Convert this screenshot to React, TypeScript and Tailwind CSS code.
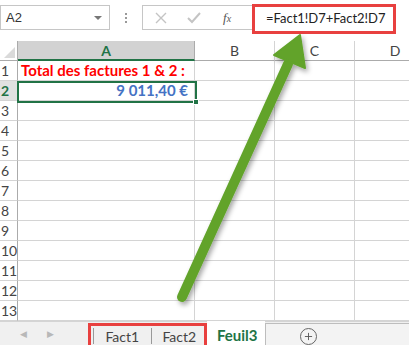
import { Plus } from "lucide-react";

const rows = Array.from({ length: 13 }, (_, i) => i + 1);

function Cell({ w, children, className = "" }: { w: string; children?: React.ReactNode; className?: string }) {
  return (
    <div className={`${w} h-full shrink-0 border-r border-b border-[#d4d4d4] flex items-center ${className}`}>
      {children}
    </div>
  );
}

export default function App() {
  return (
    <div className="relative w-[409px] h-[345px] overflow-hidden bg-white font-['Lato','Liberation_Sans',sans-serif] text-[#444]">
      {/* Formula toolbar */}
      <div className="flex h-[41px] items-start">
        <div className="mt-[5px] w-[110px] h-[25px] border border-[#c6c6c6] flex items-center justify-between pl-[5px] pr-[7px] text-[13px] text-[#333] font-['Liberation_Sans',sans-serif]">
          A2
          <span className="w-0 h-0 border-l-[4px] border-r-[4px] border-t-[4px] border-l-transparent border-r-transparent border-t-[#777]" />
        </div>
        <div className="w-[32px] h-[30px] flex flex-col items-center justify-center gap-[2px] pt-[6px]">
          <span className="w-[2px] h-[2px] bg-[#999]" />
          <span className="w-[2px] h-[2px] bg-[#999]" />
          <span className="w-[2px] h-[2px] bg-[#999]" />
        </div>
        <div className="mt-[5px] w-[130px] h-[25px] border border-[#c6c6c6] flex items-center text-[#c0c0c0]">
          <svg width="12" height="12" viewBox="0 0 12 12" className="ml-[12px]">
            <path d="M1 1 L11 11 M11 1 L1 11" stroke="#c4c4c4" strokeWidth="1.4" />
          </svg>
          <svg width="14" height="12" viewBox="0 0 14 12" className="ml-[20px]">
            <path d="M1 6 L5 10 L13 1" stroke="#c4c4c4" strokeWidth="2" fill="none" />
          </svg>
          <span className="ml-[22px] italic text-[13px] text-[#555] font-['Liberation_Serif',serif]">
            f<span className="text-[10px]">x</span>
          </span>
        </div>
      </div>

      {/* Red-framed formula */}
      <div className="absolute left-[252px] top-[4px] w-[144px] h-[30px] border-[3px] border-[#e8403f] bg-white flex items-center pl-[11px] text-[13px] text-[#222] font-['Lato',sans-serif] whitespace-nowrap">
        =Fact1!D7+Fact2!D7
      </div>

      {/* Sheet grid */}
      <div className="font-['Lato','Liberation_Sans',sans-serif]">
        <div className="flex h-[20px]">
          <div className="relative w-[18px] h-full shrink-0 border-r border-b border-[#ababab]">
            <span className="absolute right-[2px] bottom-[2px] w-0 h-0 border-b-[11px] border-l-[11px] border-b-[#dadada] border-l-transparent" />
          </div>
          <div className="w-[177px] h-full shrink-0 bg-[#d2d2d2] border-b-2 border-[#217346] border-r border-r-[#ababab] flex items-center justify-center font-bold text-[14px] text-[#217346]">
            A
          </div>
          <div className="w-[80px] h-full shrink-0 border-r border-b border-[#ababab] border-r-[#d4d4d4] flex items-center justify-center text-[14px]">B</div>
          <div className="w-[80px] h-full shrink-0 border-r border-b border-[#ababab] border-r-[#d4d4d4] flex items-center justify-center text-[14px]">C</div>
          <div className="w-[80px] h-full shrink-0 border-b border-[#ababab] flex items-center justify-center text-[14px]">D</div>
        </div>

        {rows.map((r) => (
          <div key={r} className="flex h-[20px]">
            <div
              className={`w-[18px] h-full shrink-0 border-r border-r-[#ababab] border-b border-b-[#d4d4d4] flex items-center pl-[1px] text-[14px] leading-none ${
                r === 2 ? "bg-[#e1e1e1] text-[#217346] font-bold" : "text-[#444]"
              }`}
            >
              {r}
            </div>
            <Cell w="w-[177px]">
              {r === 1 && (
                <span className="pl-[3px] font-bold text-[15px] text-[#ff0000] whitespace-nowrap">Total des factures 1 &amp; 2 :</span>
              )}
              {r === 2 && (
                <span className="ml-auto pr-[6px] font-bold text-[15px] text-[#4472c4]">9 011,40 €</span>
              )}
            </Cell>
            <Cell w="w-[80px]" />
            <Cell w="w-[80px]" />
            <Cell w="w-[80px]" />
          </div>
        ))}
      </div>

      {/* Selection on A2 */}
      <div className="absolute left-[17px] top-[81px] w-[180px] h-[22px] border-2 border-[#217346]">
        <span className="absolute -right-[4px] -bottom-[4px] w-[6px] h-[6px] bg-[#217346] border border-white" />
      </div>

      {/* Sheet tabs */}
      <div className="flex h-[24px] bg-[#f0f0f0] border-t border-[#d4d4d4] font-['Lato',sans-serif]">
        <div className="w-[88px] flex items-center gap-[20px] pl-[20px] text-[#b8b8b8] text-[9px]">
          <span>◀</span>
          <span>▶</span>
        </div>
        <div className="w-[119px] flex items-start text-[14px] text-[#444]">
          <span className="h-[16px] mt-[6px] border-l border-[#999] ml-[5px]" />
          <span className="w-[57px] text-center pt-[8px] leading-none">Fact1</span>
          <span className="h-[16px] mt-[6px] border-l border-[#999]" />
          <span className="w-[56px] text-center pt-[8px] leading-none">Fact2</span>
        </div>
        <div className="w-[58px] -mt-px bg-white flex items-start pt-[7px] pl-[10px] leading-none font-bold text-[15px] text-[#217346]">
          Feuil3
        </div>
        <div className="flex-1 mt-[1px] border-t border-l border-[#bdbdbd] bg-[#f3f3f3] flex items-end pl-[34px]">
          <span className="w-[17px] h-[17px] rounded-full border border-[#666] flex items-center justify-center">
            <Plus size={11} strokeWidth={2} color="#555" />
          </span>
        </div>
      </div>

      {/* Red frame around Fact1/Fact2 */}
      <div className="absolute left-[88px] top-[323px] w-[119px] h-[26px] border-[3px] border-[#e8403f]" />

      {/* Green arrow */}
      <svg className="absolute left-0 top-0 pointer-events-none" width="409" height="345" viewBox="0 0 409 345">
        <defs>
          <filter id="sh" x="-20%" y="-20%" width="140%" height="140%">
            <feDropShadow dx="2" dy="3" stdDeviation="2.5" floodColor="#000" floodOpacity="0.35" />
          </filter>
        </defs>
        <g filter="url(#sh)">
          <line x1="182" y1="297" x2="288" y2="64" stroke="#62a32c" strokeWidth="10" strokeLinecap="round" />
          <polygon points="300,35 274,55 305,68" fill="#62a32c" stroke="#62a32c" strokeWidth="2" strokeLinejoin="round" />
        </g>
      </svg>
    </div>
  );
}
